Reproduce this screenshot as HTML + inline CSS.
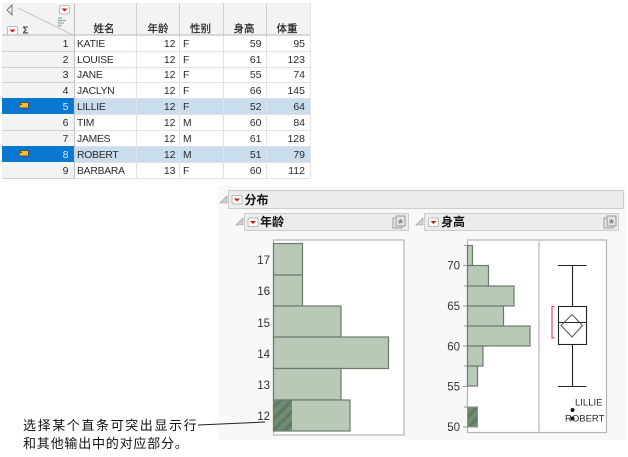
<!DOCTYPE html>
<html><head><meta charset="utf-8">
<style>
html,body{margin:0;padding:0;background:#fff}
#p{position:relative;width:628px;height:457px;overflow:hidden;background:#fff;font-family:"Liberation Sans","Noto Sans CJK SC",sans-serif;color:#222}
svg{position:absolute;left:0;top:0}
text{font-family:"Liberation Sans","Noto Sans CJK SC",sans-serif;fill:#2a2a2a}
.h{font-size:10.5px;text-anchor:middle;fill:#1f1f1f;stroke:#1f1f1f;stroke-width:.2}
.c{font-size:10.3px;letter-spacing:-.2px}
.r{font-size:10.5px;text-anchor:end}
.t{font-size:11.5px;text-anchor:end;fill:#333}
.b{fill:#b8c9b8;stroke:#6f7a6f;stroke-width:1.2}
.a{font-size:13px;letter-spacing:1.6px;fill:#111}
</style></head><body><div id="p">
<svg width="628" height="457" viewBox="0 0 628 457">
<defs>
<pattern id="ha" width="8" height="8" patternUnits="userSpaceOnUse" patternTransform="rotate(-45)"><rect width="8" height="8" fill="#6f8b72"/><rect width="8" height="3" fill="#5f7a63"/></pattern>
<g id="tri"><rect x=".5" y=".5" width="10" height="8.500" rx="1.500" fill="#fbfbfb" stroke="#bbb"/><path d="M2.500 3.500h6l-3 3z" fill="#d8101c"/></g>
<g id="tag"><path d="M21 4.500h6.500a1 1 0 0 1 1 1v3.500a1 1 0 0 1-1 1h-8l-.5-2.500z" fill="#f0bd3a" stroke="#4f4214" stroke-width=".8"/><path d="M20.500 6.500h1.500" stroke="#3a3010" stroke-width="1"/></g>
</defs>

<!-- table header -->
<rect x="2" y="3" width="308" height="32" fill="#f3f3f3"/>
<rect x="2" y="35" width="72" height="144" fill="#f3f3f3"/>
<path d="M18 8 L73 35" stroke="#c9c9c9" fill="none"/>
<path d="M12 5 L7 10 L12 15z" fill="#f2f2f2" stroke="#777"/>
<use href="#tri" x="59" y="5"/>
<use href="#tri" x="7" y="26"/>
<text x="22.500" y="33.500" style="font-size:10px;font-weight:700;fill:#444">Σ</text>
<path d="M59 18h3M59 20.500h7M59 23h5M59 25.500h3" stroke="#8fb19a" stroke-width="1.200"/>
<path d="M58.500 17v10" stroke="#999" stroke-width=".6"/>

<!-- selected rows -->
<rect x="2" y="98" width="72" height="16" fill="#0a78d0"/>
<rect x="2" y="146" width="72" height="16" fill="#0a78d0"/>
<rect x="75" y="98" width="235" height="16" fill="#c9dded"/>
<rect x="75" y="146" width="235" height="16" fill="#c9dded"/>
<use href="#tag" y="98"/>
<use href="#tag" y="146"/>

<!-- grid -->
<g stroke="#dfe0e8" stroke-width="1">
<path d="M75 51.500H310M75 67.500H310M75 82.500H310M75 98.500H310M75 114.500H310M75 130.500H310M75 146.500H310M75 162.500H310M75 178.500H310"/>
<path d="M136.500 35V178M179.500 35V178M223.500 35V178M266.500 35V178"/>
</g>
<g stroke="#cfcfcf" stroke-width="1">
<path d="M2 51.500H74M2 67.500H74M2 82.500H74M2 130.500H74M2 178.500H74"/>
<path d="M136.500 3V35M179.500 3V35M223.500 3V35M266.500 3V35"/>
</g>
<path d="M2 35H310" stroke="#c4c4c4" stroke-width="1.200"/>
<path d="M74.500 3V179" stroke="#c4c4c4" stroke-width="1.200"/>
<path d="M310.500 3V179" stroke="#e6e6e6"/>

<text class="h" x="104" y="32">姓名</text>
<text class="h" x="158" y="32">年龄</text>
<text class="h" x="200.500" y="32">性别</text>
<text class="h" x="244" y="32">身高</text>
<text class="h" x="287" y="32">体重</text>

<g>
<text class="r" x="68.500" y="47">1</text><text class="c" x="77" y="47">KATIE</text><text class="r" x="175.500" y="47">12</text><text class="c" x="183" y="47">F</text><text class="r" x="261.500" y="47">59</text><text class="r" x="305" y="47">95</text>
<text class="r" x="68.500" y="63">2</text><text class="c" x="77" y="63">LOUISE</text><text class="r" x="175.500" y="63">12</text><text class="c" x="183" y="63">F</text><text class="r" x="261.500" y="63">61</text><text class="r" x="305" y="63">123</text>
<text class="r" x="68.500" y="78">3</text><text class="c" x="77" y="78">JANE</text><text class="r" x="175.500" y="78">12</text><text class="c" x="183" y="78">F</text><text class="r" x="261.500" y="78">55</text><text class="r" x="305" y="78">74</text>
<text class="r" x="68.500" y="94">4</text><text class="c" x="77" y="94">JACLYN</text><text class="r" x="175.500" y="94">12</text><text class="c" x="183" y="94">F</text><text class="r" x="261.500" y="94">66</text><text class="r" x="305" y="94">145</text>
<text class="r" x="68.500" y="110" style="fill:#d7e9f8">5</text><text class="c" x="77" y="110">LILLIE</text><text class="r" x="175.500" y="110">12</text><text class="c" x="183" y="110">F</text><text class="r" x="261.500" y="110">52</text><text class="r" x="305" y="110">64</text>
<text class="r" x="68.500" y="126">6</text><text class="c" x="77" y="126">TIM</text><text class="r" x="175.500" y="126">12</text><text class="c" x="183" y="126">M</text><text class="r" x="261.500" y="126">60</text><text class="r" x="305" y="126">84</text>
<text class="r" x="68.500" y="142">7</text><text class="c" x="77" y="142">JAMES</text><text class="r" x="175.500" y="142">12</text><text class="c" x="183" y="142">M</text><text class="r" x="261.500" y="142">61</text><text class="r" x="305" y="142">128</text>
<text class="r" x="68.500" y="158" style="fill:#d7e9f8">8</text><text class="c" x="77" y="158">ROBERT</text><text class="r" x="175.500" y="158">12</text><text class="c" x="183" y="158">M</text><text class="r" x="261.500" y="158">51</text><text class="r" x="305" y="158">79</text>
<text class="r" x="68.500" y="174">9</text><text class="c" x="77" y="174">BARBARA</text><text class="r" x="175.500" y="174">13</text><text class="c" x="183" y="174">F</text><text class="r" x="261.500" y="174">60</text><text class="r" x="305" y="174">112</text>
</g>

<!-- report panel -->
<rect x="218" y="186" width="408" height="254" fill="#f8f8f8"/>
<path d="M227 196v7h-7z" fill="#d0d0d0" stroke="#999" stroke-width=".6"/>
<rect x="228.500" y="190.500" width="395" height="18" fill="#ececec" stroke="#cdcdcd"/>
<use href="#tri" x="231.500" y="195"/>
<text x="244.500" y="204" style="font-size:12px;font-weight:700;fill:#111">分布</text>

<path d="M243 218v7h-7z" fill="#d0d0d0" stroke="#999" stroke-width=".6"/>
<rect x="244.500" y="213.500" width="164" height="17" fill="#ececec" stroke="#cdcdcd"/>
<use href="#tri" x="247.500" y="217.500"/>
<text x="260" y="226" style="font-size:12px;font-weight:700;fill:#111">年龄</text>
<rect x="396" y="216" width="9" height="10" fill="#e4e4e4" stroke="#999"/>
<path d="M395 218h-2v10h9v-2" fill="none" stroke="#999"/>
<path d="M400.500 218.500l1 2h1.800l-1.400 1.400.6 2-2-1.100-2 1.100.6-2-1.400-1.400h1.800z" fill="#888"/>

<path d="M423 218v7h-7z" fill="#d0d0d0" stroke="#999" stroke-width=".6"/>
<rect x="424.500" y="213.500" width="194" height="17" fill="#ececec" stroke="#cdcdcd"/>
<use href="#tri" x="428" y="217.500"/>
<text x="441" y="226" style="font-size:12px;font-weight:700;fill:#111">身高</text>
<rect x="607" y="216" width="9" height="10" fill="#e4e4e4" stroke="#999"/>
<path d="M606 218h-2v10h9v-2" fill="none" stroke="#999"/>
<path d="M611.500 218.500l1 2h1.800l-1.400 1.400.6 2-2-1.100-2 1.100.6-2-1.400-1.400h1.800z" fill="#888"/>

<!-- age plot -->
<rect x="273.500" y="240" width="130.500" height="195" fill="#fff" stroke="#b5b5b5" stroke-width="1.200"/>
<rect class="b" x="273.500" y="243.500" width="29" height="31.500"/>
<rect class="b" x="273.500" y="275" width="29" height="31"/>
<rect class="b" x="273.500" y="306" width="67.500" height="31"/>
<rect class="b" x="273.500" y="337" width="115" height="31.500"/>
<rect class="b" x="273.500" y="368.500" width="67.500" height="31.500"/>
<rect class="b" x="273.500" y="400" width="76.500" height="31"/>
<rect x="274" y="400.500" width="18" height="30" fill="url(#ha)"/>
<text class="t" x="270" y="264">17</text>
<text class="t" x="270" y="295">16</text>
<text class="t" x="270" y="327">15</text>
<text class="t" x="270" y="358">14</text>
<text class="t" x="270" y="389">13</text>
<text class="t" x="270" y="420">12</text>

<!-- height plot -->
<rect x="467.500" y="240" width="139" height="192.500" fill="#fff" stroke="#b5b5b5" stroke-width="1.200"/>
<path d="M539 240V432" stroke="#d4d4d4" stroke-width="2"/>
<rect class="b" x="467.500" y="245.500" width="5" height="20"/>
<rect class="b" x="467.500" y="265.500" width="21" height="20.500"/>
<rect class="b" x="467.500" y="286" width="46.500" height="20"/>
<rect class="b" x="467.500" y="306" width="36" height="20"/>
<rect class="b" x="467.500" y="326" width="62.500" height="20"/>
<rect class="b" x="467.500" y="346" width="15.500" height="20"/>
<rect class="b" x="467.500" y="366" width="10" height="20"/>
<rect x="467.500" y="407" width="10" height="20" fill="url(#ha)" stroke="#8a958a"/>
<path d="M464 245.500h3M463 265.500h4M464 286h3M463 306h4M464 326h3M463 346h4M464 366h3M463 386.500h4M464 407h3M463 427h4" stroke="#999"/>
<text class="t" x="460" y="269.500">70</text>
<text class="t" x="460" y="310">65</text>
<text class="t" x="460" y="350.500">60</text>
<text class="t" x="460" y="390.500">55</text>
<text class="t" x="460" y="431">50</text>

<!-- box plot -->
<g stroke="#222" fill="none" stroke-width="1.100">
<path d="M558 265.500H586.500M572.500 265.500V306.500M572.500 344.500V386.500M558 386.500H586.500"/>
<rect x="558.500" y="306.500" width="28" height="38"/>
<path d="M558.500 322.500H586.500"/>
</g>
<path d="M572 314.500L582.500 325.500L572 337L561 325.500z" fill="none" stroke="#555"/>
<path d="M554.500 306.500H552V338H554.500" fill="none" stroke="#e8506a" stroke-width="1.300"/>
<circle cx="572.500" cy="410" r="2" fill="#111"/>
<circle cx="572.500" cy="418.500" r="2" fill="#111"/>
<text x="575" y="405.500" style="font-size:9.500px">LILLIE</text>
<text x="565" y="421.500" style="font-size:9.500px">ROBERT</text>

<!-- annotation -->
<path d="M198 425L265 422" stroke="#222" stroke-width="1"/>
<text class="a" x="23" y="430">选择某个直条可突出显示行</text>
<text class="a" x="23" y="448" style="letter-spacing:.8px">和其他输出中的对应部分。</text>
</svg>
</div></body></html>
